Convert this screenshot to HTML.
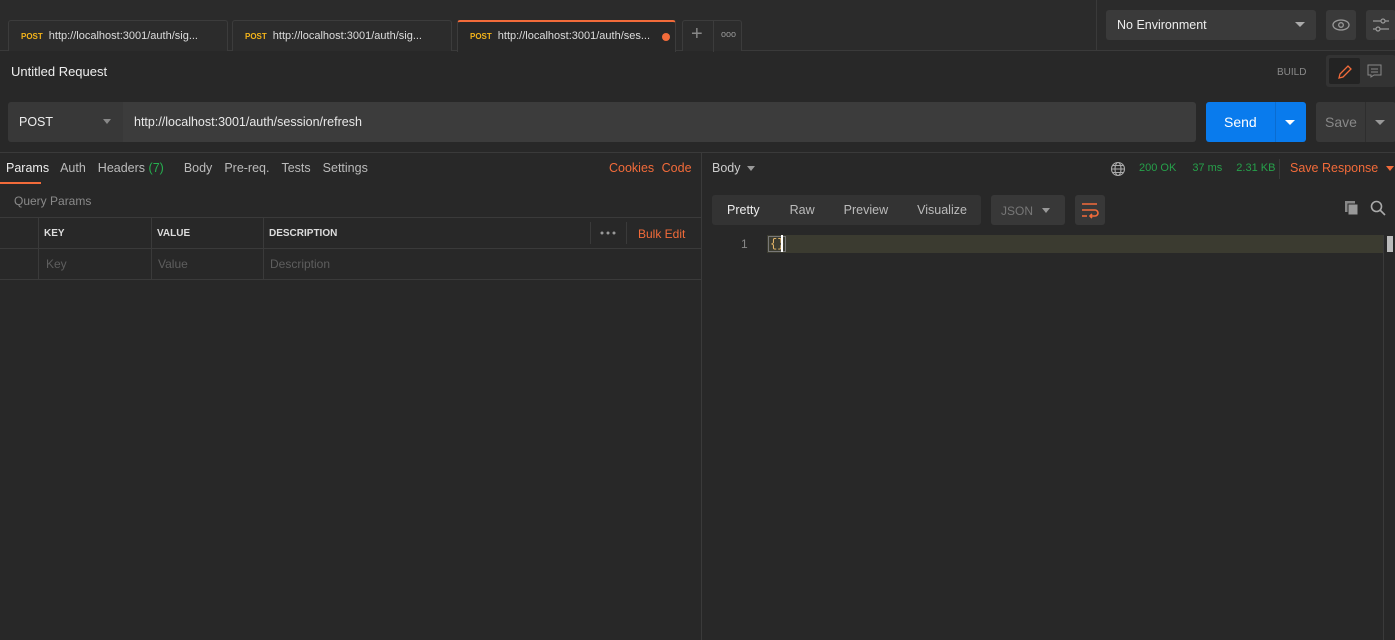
<!DOCTYPE html>
<html><head><style>
*{box-sizing:border-box;margin:0;padding:0}
body{width:1395px;height:640px;background:#282828;font-family:"Liberation Sans",sans-serif;color:#d0d0d0;position:relative;overflow:hidden;font-size:12px}
.a{position:absolute}
.tab{position:absolute;top:20px;height:31px;background:#2c2c2c;border:1px solid #3c3c3c;border-bottom:none;border-radius:3px 3px 0 0;font-size:11px;color:#ddd;padding:9px 0 0 12px;white-space:nowrap}
.tab b{color:#f4b41a;font-size:8px;margin-right:6px}
.gray{color:#8a8a8a}
</style></head><body>
<div class="a" style="left:0;top:0;width:1395px;height:51px;background:#2b2b2b;border-bottom:1px solid #3a3a3a"></div>
<div class="tab" style="left:8px;width:220px"><b>POST</b>http://localhost:3001/auth/sig...</div>
<div class="tab" style="left:232px;width:220px"><b>POST</b>http://localhost:3001/auth/sig...</div>
<div class="tab" style="left:457px;width:219px;background:#282828;border-top:2px solid #f26b3a;height:32px;padding-top:8px"><b>POST</b>http://localhost:3001/auth/ses...<span class="a" style="left:204px;top:11px;width:8px;height:8px;border-radius:50%;background:#f26b3a"></span></div>
<div class="tab" style="left:682px;width:60px;padding:0"><span class="a" style="left:8px;top:2px;font-size:20px;color:#888">+</span><span class="a" style="left:30px;top:0;width:1px;height:31px;background:#3c3c3c"></span><span class="a" style="left:38px;top:8px;font-size:9px;color:#999">ooo</span></div>
<div class="a" style="left:1096px;top:0;width:1px;height:51px;background:#3a3a3a"></div>
<div class="a" style="left:1106px;top:10px;width:210px;height:30px;background:#3a3a3a;border-radius:3px;font-size:12.5px;color:#eee;padding:8px 0 0 11px">No Environment<span class="a" style="right:11px;top:12px;border:5px solid transparent;border-top:5px solid #aaa"></span></div>
<div class="a" style="left:1326px;top:10px;width:30px;height:30px;background:#3a3a3a;border-radius:3px"><svg width="30" height="30"><ellipse cx="15" cy="15" rx="8" ry="5" fill="none" stroke="#999" stroke-width="1.3"/><circle cx="15" cy="15" r="2.3" fill="none" stroke="#999" stroke-width="1.3"/></svg></div>
<div class="a" style="left:1366px;top:10px;width:30px;height:30px;background:#3a3a3a;border-radius:3px"><svg width="30" height="30" stroke="#999" fill="none" stroke-width="1.2"><path d="M7 11h16M7 19h16"/><circle cx="17" cy="11" r="2" fill="#3a3a3a"/><circle cx="12" cy="19" r="2" fill="#3a3a3a"/></svg></div>
<div class="a" style="left:11px;top:64px;font-size:13px;color:#eee">Untitled Request</div>
<div class="a gray" style="left:1277px;top:67px;font-size:10px">BUILD</div>
<div class="a" style="left:1326px;top:55px;width:70px;height:32px;background:#333;border-radius:3px"><div class="a" style="left:3px;top:3px;width:31px;height:26px;background:#232323;border-radius:2px"><svg width="31" height="26"><path d="M10 20l1-4 8-8 3 3-8 8z" fill="none" stroke="#f26b3a" stroke-width="1.3"/></svg></div><svg class="a" style="left:40px;top:8px" width="18" height="16"><path d="M2 2h13v10H8l-3 2v-2H2z" fill="none" stroke="#888"/><path d="M5 6h7M5 9h7" stroke="#888"/></svg></div>
<div class="a" style="left:8px;top:102px;width:115px;height:40px;background:#383838;border-radius:3px 0 0 3px;font-size:12.5px;color:#eee;padding:13px 0 0 11px">POST<span class="a" style="left:95px;top:17px;border:4.5px solid transparent;border-top:5px solid #888"></span></div>
<div class="a" style="left:123px;top:102px;width:1073px;height:40px;background:#3c3c3c;border-radius:0 3px 3px 0;font-size:12.5px;color:#e8e8e8;padding:13px 0 0 11px">http://localhost:3001/auth/session/refresh</div>
<div class="a" style="left:1206px;top:102px;width:100px;height:40px;background:#097bed;border-radius:3px;color:#fff;font-size:14px;padding:12px 0 0 18px">Send<span class="a" style="left:69px;top:0;width:1px;height:40px;background:#0a6cd0"></span><span class="a" style="left:79px;top:18px;border:5px solid transparent;border-top:5px solid #fff"></span></div>
<div class="a" style="left:1316px;top:102px;width:80px;height:40px;background:#383838;border-radius:3px;color:#888;font-size:14px;padding:12px 0 0 9px">Save<span class="a" style="left:49px;top:0;width:1px;height:40px;background:#2e2e2e"></span><span class="a" style="left:59px;top:18px;border:5px solid transparent;border-top:5px solid #999"></span></div>
<div class="a" style="left:0;top:152px;width:1395px;height:1px;background:#3a3a3a"></div>
<div class="a" style="left:701px;top:153px;width:1px;height:487px;background:#3a3a3a"></div>
<div class="a" style="top:161px;left:6px;font-size:12.5px;color:#bbb;white-space:nowrap"><span style="color:#eee">Params</span><span style="margin-left:11px">Auth</span><span style="margin-left:12px">Headers <span style="color:#26b04f">(7)</span></span><span style="margin-left:20px">Body</span><span style="margin-left:12px">Pre-req.</span><span style="margin-left:12px">Tests</span><span style="margin-left:12px">Settings</span></div>
<div class="a" style="left:0;top:182px;width:41px;height:2px;background:#f26b3a"></div>
<div class="a" style="top:161px;left:609px;font-size:12.5px;color:#f26b3a">Cookies <span style="margin-left:4px">Code</span></div>
<div class="a gray" style="left:14px;top:194px;font-size:12px">Query Params</div>
<div class="a" style="left:0;top:217px;width:701px;height:63px;border-top:1px solid #3a3a3a;border-bottom:1px solid #3a3a3a"></div>
<div class="a" style="left:0;top:248px;width:701px;height:1px;background:#3a3a3a"></div>
<div class="a" style="left:38px;top:218px;width:1px;height:61px;background:#3a3a3a"></div>
<div class="a" style="left:151px;top:218px;width:1px;height:61px;background:#3a3a3a"></div>
<div class="a" style="left:263px;top:218px;width:1px;height:61px;background:#3a3a3a"></div>
<div class="a" style="left:590px;top:222px;width:1px;height:22px;background:#3a3a3a"></div>
<div class="a" style="left:626px;top:222px;width:1px;height:22px;background:#3a3a3a"></div>
<div class="a" style="left:44px;top:228px;font-size:10px;font-weight:bold;color:#ddd">KEY</div>
<div class="a" style="left:157px;top:228px;font-size:10px;font-weight:bold;color:#ddd">VALUE</div>
<div class="a" style="left:269px;top:228px;font-size:10px;font-weight:bold;color:#ddd">DESCRIPTION</div>
<svg class="a" style="left:600px;top:230px" width="18" height="6" fill="#999"><circle cx="2" cy="3" r="1.5"/><circle cx="8" cy="3" r="1.5"/><circle cx="14" cy="3" r="1.5"/></svg>
<div class="a" style="left:638px;top:227px;font-size:12px;color:#f26b3a">Bulk Edit</div>
<div class="a" style="left:46px;top:257px;color:#5e5e5e;font-size:12px">Key</div>
<div class="a" style="left:158px;top:257px;color:#5e5e5e;font-size:12px">Value</div>
<div class="a" style="left:270px;top:257px;color:#5e5e5e;font-size:12px">Description</div>
<div class="a" style="left:712px;top:161px;font-size:12.5px;color:#ccc">Body<span style="display:inline-block;margin-left:6px;border:4px solid transparent;border-top:5px solid #999;vertical-align:-3px"></span></div>
<svg class="a" style="left:1110px;top:161px" width="16" height="16" fill="none" stroke="#aaa" stroke-width="1.1"><circle cx="8" cy="8" r="6.5"/><ellipse cx="8" cy="8" rx="3" ry="6.5"/><path d="M1.5 8h13M3 4.5h10M3 11.5h10"/></svg>
<div class="a" style="left:1139px;top:162px;font-size:11px;color:#26a04a;white-space:nowrap">200 OK<span style="margin-left:16px">37 ms</span><span style="margin-left:14px">2.31 KB</span></div>
<div class="a" style="left:1279px;top:159px;width:1px;height:20px;background:#3a3a3a"></div>
<div class="a" style="left:1290px;top:161px;font-size:12.5px;color:#f26b3a;white-space:nowrap">Save Response<span style="display:inline-block;margin-left:8px;border:4px solid transparent;border-top:5px solid #f26b3a;vertical-align:-3px"></span></div>
<div class="a" style="left:712px;top:195px;width:269px;height:30px;background:#333;border-radius:3px;font-size:12.5px;color:#bbb;padding:8px 0 0 15px;white-space:nowrap"><span style="color:#eee">Pretty</span><span style="margin-left:30px">Raw</span><span style="margin-left:29px">Preview</span><span style="margin-left:29px">Visualize</span></div>
<div class="a" style="left:991px;top:195px;width:74px;height:30px;background:#383838;border-radius:3px;font-size:12px;color:#777;padding:9px 0 0 10px">JSON<span class="a" style="left:51px;top:13px;border:4.5px solid transparent;border-top:5px solid #999"></span></div>
<div class="a" style="left:1075px;top:195px;width:30px;height:30px;background:#383838;border-radius:3px"><svg width="30" height="30" fill="none" stroke="#f26b3a" stroke-width="1.6"><path d="M7 9h15M7 15h13a3 3 0 0 1 0 6h-4M7 21h5M17 19l-2 2 2 2"/></svg></div>
<svg class="a" style="left:1344px;top:200px" width="16" height="16"><rect x="1" y="1" width="10" height="11" fill="#888"/><rect x="4" y="4" width="10" height="11" fill="#999" stroke="#282828"/></svg>
<svg class="a" style="left:1370px;top:200px" width="16" height="16" fill="none" stroke="#aaa" stroke-width="1.6"><circle cx="6.5" cy="6.5" r="5"/><path d="M10 10l5 5"/></svg>
<div class="a" style="left:767px;top:235px;width:616px;height:18px;background:#3b3b30"></div>
<div class="a" style="left:741px;top:237px;color:#888;font-size:12px">1</div>
<div class="a" style="left:768px;top:236px;font-family:'Liberation Mono',monospace;font-size:12px;color:#e8b86a;border:1px solid #777;padding:0 1px;line-height:14px">{}</div>
<div class="a" style="left:781px;top:235px;width:2px;height:17px;background:#fff"></div>
<div class="a" style="left:1383px;top:235px;width:12px;height:405px;border-left:1px solid #3a3a3a"></div>
<div class="a" style="left:1387px;top:236px;width:6px;height:16px;background:#bbb"></div>
</body></html>
